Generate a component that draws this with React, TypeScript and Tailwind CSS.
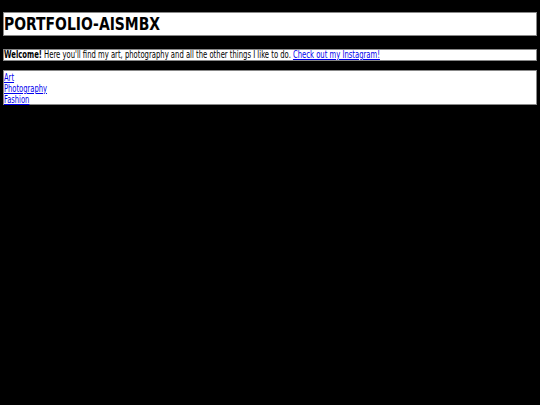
export default function App() {
  return (
    <div
      className="min-h-[405px] bg-black px-[3px] pt-[12px] text-black"
      style={{ fontFamily: '"DejaVu Sans Condensed", "DejaVu Sans", sans-serif' }}
    >
      <div className="h-[24px] border border-[#888] bg-white flex items-center">
        <h1 className="inline-block origin-left scale-x-[0.86] text-[18px] font-bold leading-none whitespace-nowrap">
          PORTFOLIO-AISMBX
        </h1>
      </div>

      <div className="mt-[13px] h-[12px] border border-[#888] bg-white flex items-center text-[10px] leading-none">
        <p className="inline-block origin-left scale-x-[0.76] whitespace-nowrap">
          <b>Welcome!</b> Here you'll find my art, photography and all the other things I like to do.{" "}
          <a href="#" className="text-[#0000ee] underline">Check out my Instagram!</a>
        </p>
      </div>

      <div className="mt-[9px] h-[35px] border border-[#888] bg-white pt-[1px] text-[10px] leading-[11px]">
        <ul className="origin-left scale-x-[0.75]">
          <li><a href="#" className="text-[#0000ee] underline">Art</a></li>
          <li><a href="#" className="text-[#0000ee] underline">Photography</a></li>
          <li><a href="#" className="text-[#0000ee] underline">Fashion</a></li>
        </ul>
      </div>
    </div>
  );
}
